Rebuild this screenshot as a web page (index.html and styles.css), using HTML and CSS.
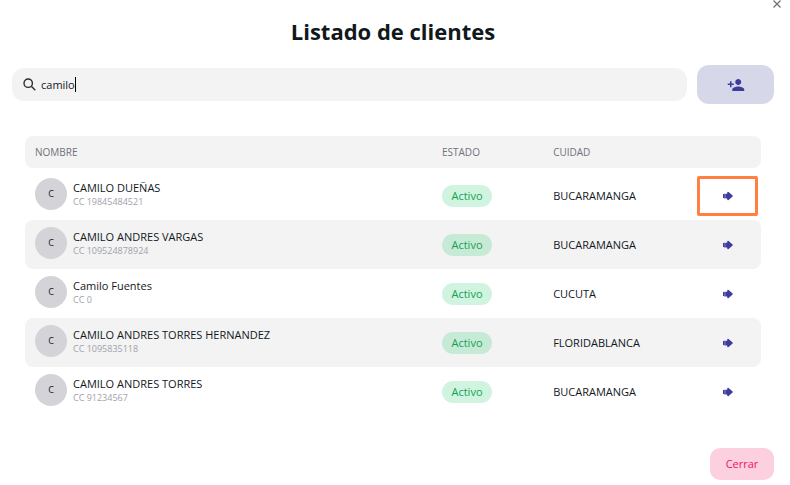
FILE: index.html
```
<!DOCTYPE html>
<html lang="es">
<head>
    <meta charset="UTF-8">
    <meta name="viewport" content="width=device-width, initial-scale=1">
    <title>Listado de clientes</title>
    <link rel="stylesheet" href="styles.css">
</head>
<body>
    <svg class="sprite" aria-hidden="true">
        <symbol id="arrow" viewBox="0 0 10 10">
            <path d="M0 3h1v4H0zM1.2 2.8h1v4.6h-1zM2.4 2.8H4.2V1.4Q4.6.2 5.6 1L9.6 4.6Q10 5 9.6 5.4L5.6 9Q4.6 9.8 4.2 8.6V7.4H2.4z"/>
        </symbol>
    </svg>

    <button class="close" type="button" aria-label="Cerrar ventana">
        <svg viewBox="0 0 8 8"><path d="M.5.5l7 7M7.5.5l-7 7"/></svg>
    </button>

    <main class="modal">
        <h1>Listado de clientes</h1>

        <div class="toolbar">
            <label class="search">
                <svg viewBox="0 0 14 14"><circle cx="5.2" cy="5.2" r="4.2"/><path d="M8.3 8.3l4 4"/></svg>
                <input type="text" value="camilo" aria-label="Buscar cliente">
                <span class="caret"></span>
            </label>
            <button class="add" type="button" aria-label="Agregar cliente">
                <svg viewBox="0 0 24 24"><path d="M15 12c2.21 0 4-1.79 4-4s-1.79-4-4-4-4 1.79-4 4 1.79 4 4 4zm-9-2V7H4v3H1v2h3v3h2v-3h3v-2H6zm9 4c-2.67 0-8 1.34-8 4v2h16v-2c0-2.66-5.33-4-8-4z"/></svg>
            </button>
        </div>

        <div class="tableContainer">
            <table>
                <thead>
                    <tr>
                        <th class="colName">NOMBRE</th>
                        <th class="colState">ESTADO</th>
                        <th>CUIDAD</th>
                        <th class="colAction"></th>
                    </tr>
                </thead>
                <tbody>
                    <tr class="spacer"><td colspan="4"></td></tr>
                    <tr>
                        <td><div class="user"><span class="avatar">C</span><div><p class="name">CAMILO DUEÑAS</p><p class="doc">CC 19845484521</p></div></div></td>
                        <td><span class="badge">Activo</span></td>
                        <td>BUCARAMANGA</td>
                        <td class="action"><button class="go selected" type="button" aria-label="Ver cliente"><svg><use href="#arrow"/></svg></button></td>
                    </tr>
                    <tr class="striped">
                        <td><div class="user"><span class="avatar">C</span><div><p class="name">CAMILO ANDRES VARGAS</p><p class="doc">CC 109524878924</p></div></div></td>
                        <td><span class="badge">Activo</span></td>
                        <td>BUCARAMANGA</td>
                        <td class="action"><button class="go" type="button" aria-label="Ver cliente"><svg><use href="#arrow"/></svg></button></td>
                    </tr>
                    <tr>
                        <td><div class="user"><span class="avatar">C</span><div><p class="name">Camilo Fuentes</p><p class="doc">CC 0</p></div></div></td>
                        <td><span class="badge">Activo</span></td>
                        <td>CUCUTA</td>
                        <td class="action"><button class="go" type="button" aria-label="Ver cliente"><svg><use href="#arrow"/></svg></button></td>
                    </tr>
                    <tr class="striped">
                        <td><div class="user"><span class="avatar">C</span><div><p class="name">CAMILO ANDRES TORRES HERNANDEZ</p><p class="doc">CC 1095835118</p></div></div></td>
                        <td><span class="badge">Activo</span></td>
                        <td>FLORIDABLANCA</td>
                        <td class="action"><button class="go" type="button" aria-label="Ver cliente"><svg><use href="#arrow"/></svg></button></td>
                    </tr>
                    <tr>
                        <td><div class="user"><span class="avatar">C</span><div><p class="name">CAMILO ANDRES TORRES</p><p class="doc">CC 91234567</p></div></div></td>
                        <td><span class="badge">Activo</span></td>
                        <td>BUCARAMANGA</td>
                        <td class="action"><button class="go" type="button" aria-label="Ver cliente"><svg><use href="#arrow"/></svg></button></td>
                    </tr>
                </tbody>
            </table>
        </div>

        <footer>
            <button class="cancel" type="button">Cerrar</button>
        </footer>
    </main>
</body>
</html>
```
FILE: styles.css
```
* {box-sizing: border-box}
body {
    margin: 0;
    font-family: "Segoe UI", "Open Sans", "Noto Sans", sans-serif;
    font-size: 11px;
    line-height: 16px;
    color: #11181c;
    background-color: #fff;
}
button, input {
    font: inherit;
    border: none;
    padding: 0;
}
button {
    cursor: pointer;
}
p {
    margin: 0;
}
.sprite {
    display: none;
}

/* Close icon in the corner of the window */
.close {
    position: absolute;
    top: 0;
    right: 8px;
    width: 10px;
    height: 8px;
    background: none;
}
.close svg {
    display: block;
    width: 8px;
    height: 8px;
    margin: 0 auto;
    fill: none;
    stroke: #71717a;
    stroke-width: 1.3;
}

.modal {
    padding: 15px 16px 5px 12px;
}
h1 {
    margin: 0 0 18px;
    font-size: 22px;
    line-height: 32px;
    font-weight: 700;
    text-align: center;
}

/* Search and add button */
.toolbar {
    display: flex;
    align-items: center;
    gap: 10px;
}
.search {
    flex: 1;
    display: flex;
    align-items: center;
    height: 33px;
    padding: 0 11px;
    border-radius: 12px;
    background-color: #f3f3f3;
}
.search svg {
    width: 14px;
    height: 14px;
    margin-right: 4px;
    fill: none;
    stroke: #2b2f33;
    stroke-width: 1.4;
}
.search input {
    field-sizing: content;
    background: none;
    color: inherit;
    outline: none;
}
.caret {
    width: 1px;
    height: 15px;
    background-color: #000;
}
.add {
    width: 77px;
    height: 39px;
    border-radius: 12px;
    background-color: #d7d7ea;
}
.add svg {
    display: block;
    width: 18px;
    height: 18px;
    margin: 0 auto;
    fill: #3c3c9c;
}

/* Clients table */
.tableContainer {
    margin: 32px 13px;
}
table {
    width: 100%;
    table-layout: fixed;
    border-collapse: separate;
    border-spacing: 0;
}
th {
    height: 32px;
    padding: 0 10px;
    font-size: 10px;
    font-weight: 500;
    text-align: left;
    color: #71717a;
    background-color: #f3f3f3;
}
.colName {
    width: 55.3%;
}
.colState {
    width: 15.1%;
}
.colAction {
    width: 9.1%;
}
td {
    height: 49px;
    padding: 0 10px;
}
.spacer td {
    height: 3px;
}
.striped td {
    background-color: #f3f3f3;
}
th:first-child, .striped td:first-child {
    border-radius: 8px 0 0 8px;
}
th:last-child, .striped td:last-child {
    border-radius: 0 8px 8px 0;
}
.user {
    display: flex;
    align-items: center;
    gap: 6px;
    padding-bottom: 3px;
}
.avatar {
    width: 32px;
    height: 32px;
    border-radius: 50%;
    font-size: 9px;
    line-height: 32px;
    text-align: center;
    background-color: #d4d4d8;
}
.name {
    line-height: 15px;
}
.doc {
    font-size: 9px;
    line-height: 14px;
    color: #a1a1aa;
}
.badge {
    display: inline-block;
    min-width: 50px;
    border-radius: 11px;
    line-height: 22px;
    text-align: center;
    color: #12a150;
    background-color: #d1f4e0;
}
.striped .badge {
    background-color: #c7ead7;
}
td.action {
    padding: 0 3px;
}
.go {
    display: block;
    width: 100%;
    height: 40px;
    background: none;
    border: 3px solid transparent;
    border-radius: 2px;
}
.go.selected {
    border-color: #ff8040;
}
.go svg {
    display: block;
    width: 10px;
    height: 10px;
    margin: 0 auto;
    fill: #3c3c9c;
}

footer {
    display: flex;
    justify-content: flex-end;
}
.cancel {
    min-width: 64px;
    height: 32px;
    border-radius: 10px;
    color: #f31260;
    background-color: #fdd0df;
}
```
